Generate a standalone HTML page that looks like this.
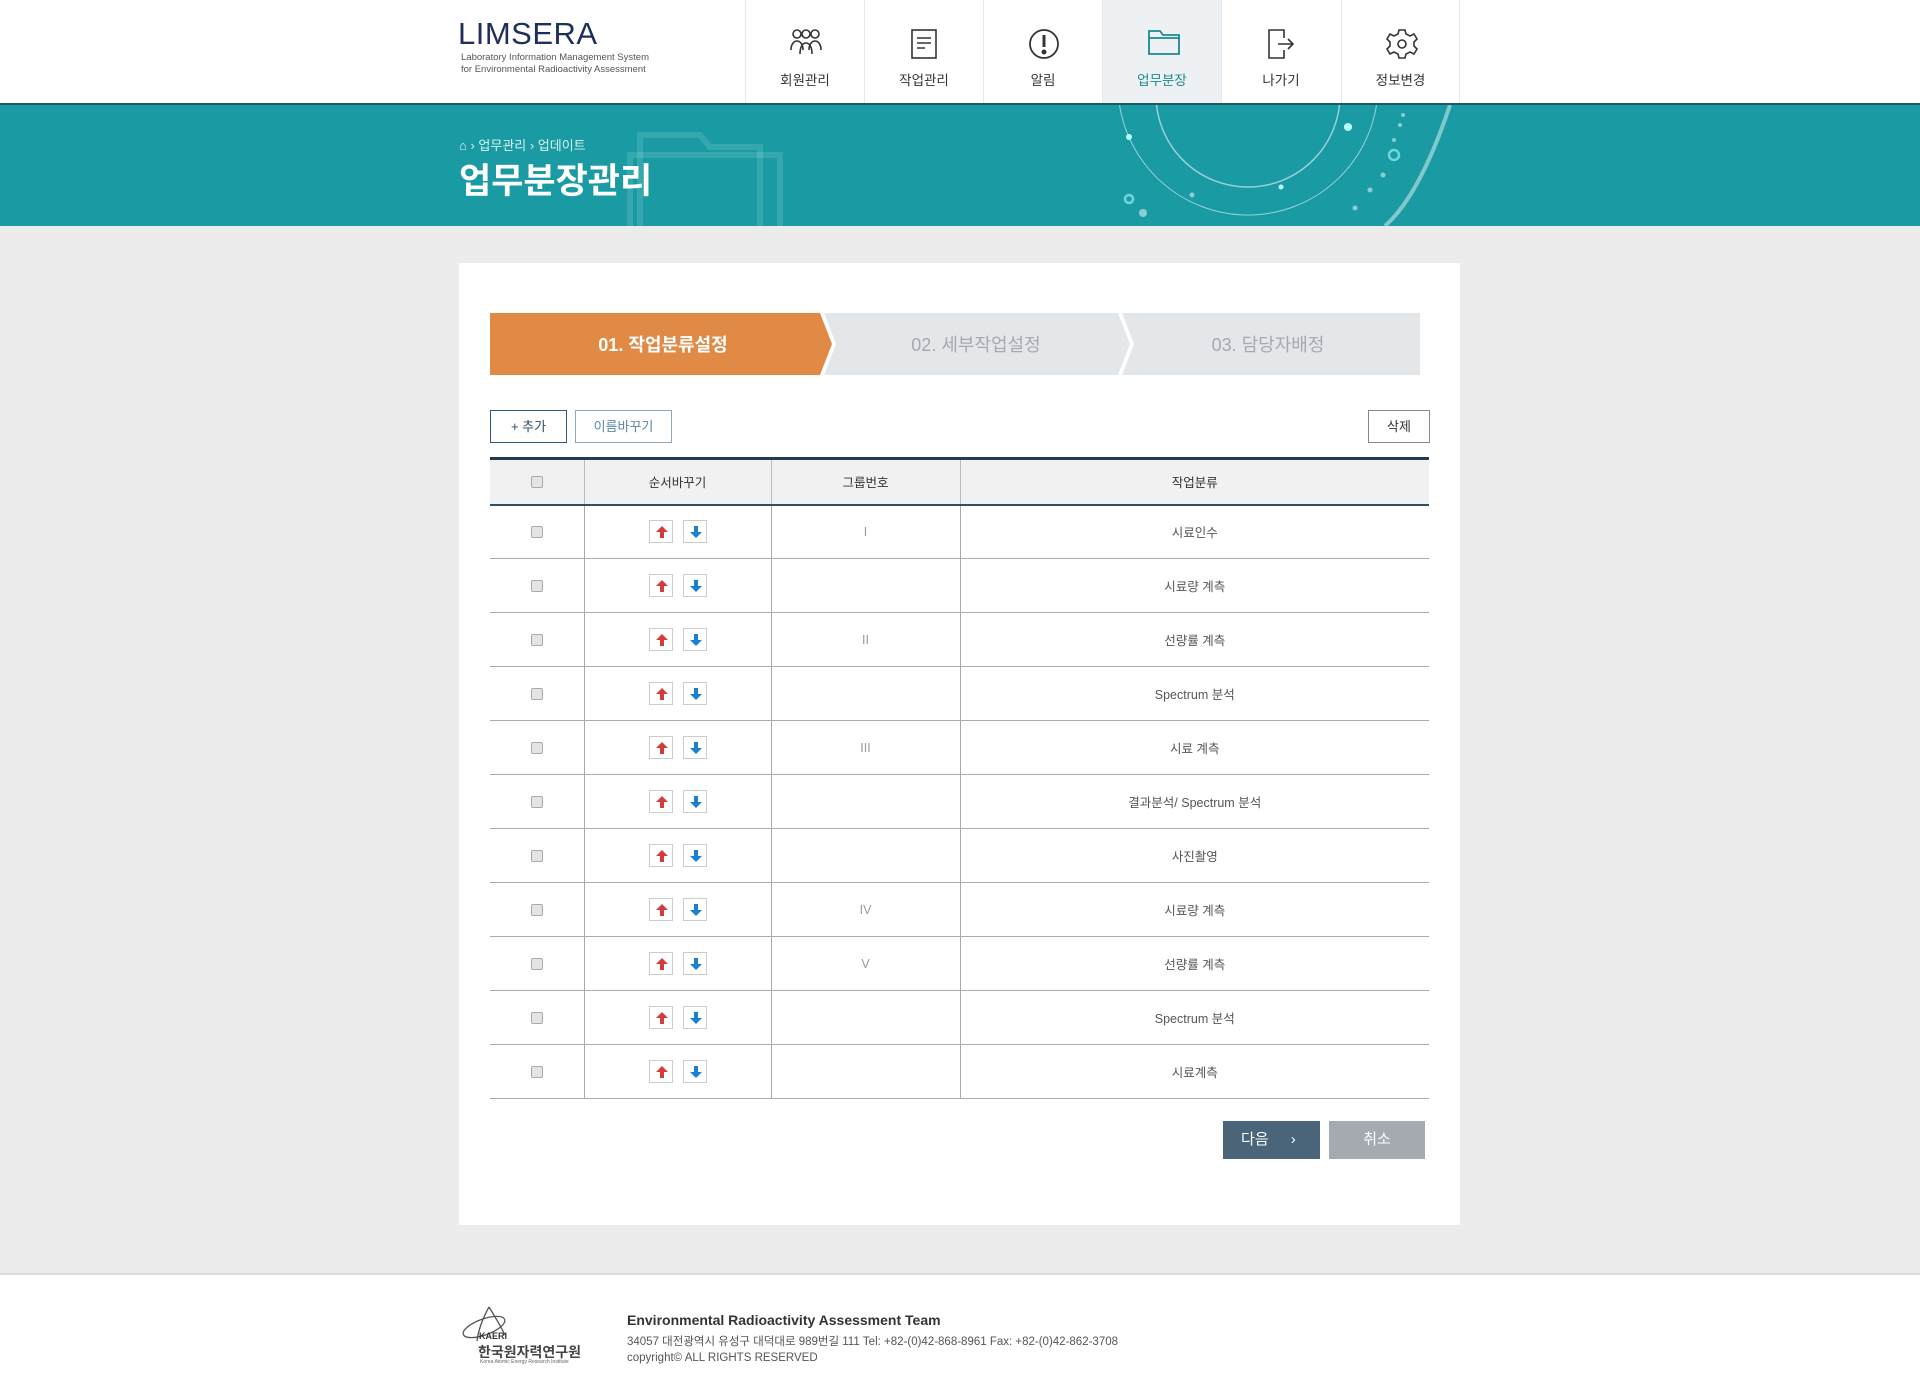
<!DOCTYPE html>
<html><head><meta charset="utf-8"><style>
*{margin:0;padding:0;box-sizing:border-box}
body{width:1920px;height:1397px;position:relative;font-family:"Liberation Sans","Noto Sans CJK KR",sans-serif;background:#ececec;overflow:hidden;color:#333}
.abs{position:absolute}
#hdr{left:0;top:0;width:1920px;height:105px;background:#fff;border-bottom:2px solid #1c5a6a}
.nav{top:0;height:103px;width:119px;border-left:1px solid #e8e8e8;text-align:center;font-size:13.5px;color:#333}
.nav svg{position:absolute;left:44px;top:28px}
.nav span{position:absolute;left:0;right:0;top:69px}
#ban{left:0;top:105px;width:1920px;height:121px;background:#1a9ba4;overflow:hidden}
#box{left:459px;top:263px;width:1001px;height:962px;background:#fff}
.btn{height:33px;border:1px solid #2d5a78;font-size:13px;line-height:31px;text-align:center;background:#fff;color:#2d4a60}
table{position:absolute;left:490px;top:457px;width:939px;border-collapse:collapse;border-top:3px solid #1e3c50;font-size:12.5px}
th{height:46px;background:#f1f1f1;font-weight:normal;border-bottom:2px solid #2f4f66;border-left:1px solid #bbb;color:#333}
td{height:54px;text-align:center;border-bottom:1px solid #aaa;border-left:1px solid #aaa;color:#555}
th:first-child,td:first-child{border-left:none}
.cb{display:inline-block;width:12px;height:12px;border:1px solid #aaa;border-radius:2px;background:#e4e4e4;vertical-align:middle}
.ab{display:inline-block;width:24px;height:23px;border:1px solid #ccc;margin:0 5px;vertical-align:middle;position:relative}
.ab svg{position:absolute;left:5px;top:4px}
.g{color:#999}
</style></head><body>
<div id="hdr" class="abs"></div>
<div class="abs" style="left:458px;top:16px;font-size:31px;color:#1f2f5c;letter-spacing:0.5px">LIMSERA</div>
<div class="abs" style="left:461px;top:52px;font-size:9.5px;color:#555;line-height:12px">Laboratory Information Management System<br>for Environmental Radioactivity Assessment</div>

<div class="abs nav" style="left:745px"><svg width="32" height="30" viewBox="0 0 32 30" fill="none" stroke="#333" stroke-width="1.6"><circle cx="7" cy="6" r="4"/><circle cx="16" cy="6" r="4"/><circle cx="25" cy="6" r="4"/><path d="M1 22c0-6 3-9 6-9s6 3 6 9M10 26c0-8 3-11 6-11s6 3 6 11M19 22c0-6 3-9 6-9s6 3 6 9"/></svg><span>회원관리</span></div>
<div class="abs nav" style="left:864px"><svg width="30" height="32" viewBox="0 0 30 32" fill="none" stroke="#333" stroke-width="1.6"><rect x="3" y="2" width="24" height="28"/><path d="M8 10h14M8 15h14M8 20h8"/></svg><span>작업관리</span></div>
<div class="abs nav" style="left:983px"><svg width="32" height="32" viewBox="0 0 32 32" fill="none" stroke="#333" stroke-width="1.8"><circle cx="16" cy="16" r="14"/><path d="M16 7v12" stroke-width="3"/><circle cx="16" cy="24" r="1.6" fill="#333"/></svg><span>알림</span></div>
<div class="abs nav" style="left:1102px;background:#eef1f4;color:#1a8a8e"><svg width="34" height="28" viewBox="0 0 34 28" fill="none" stroke="#1a8a8e" stroke-width="1.8"><path d="M2 3h11l3 4h16v19H2z"/><path d="M2 10h30"/></svg><span>업무분장</span></div>
<div class="abs nav" style="left:1221px"><svg width="30" height="32" viewBox="0 0 30 32" fill="none" stroke="#333" stroke-width="1.6"><path d="M18 10V2H3v28h15v-8"/><path d="M12 16h15M22 11l5 5-5 5"/></svg><span>나가기</span></div>
<div class="abs nav" style="left:1341px;border-right:1px solid #e8e8e8"><svg width="32" height="32" viewBox="0 0 32 32" fill="none" stroke="#333" stroke-width="1.6"><path d="M13 2h6l1 4 4 2 4-2 3 5-3 3v4l3 3-3 5-4-2-4 2-1 4h-6l-1-4-4-2-4 2-3-5 3-3v-4l-3-3 3-5 4 2 4-2z"/><circle cx="16" cy="16" r="4"/></svg><span>정보변경</span></div>

<div id="ban" class="abs">
<svg width="1920" height="121" style="position:absolute;left:0;top:0">
<g fill="none" stroke="rgba(255,255,255,0.12)" stroke-width="6"><path d="M640 121V30h60l10 12h50v79"/><path d="M630 121V50h150v71"/></g>
<g fill="none" stroke="rgba(255,255,255,0.55)" stroke-width="1.5"><circle cx="1248" cy="-10" r="92"/><circle cx="1248" cy="-20" r="130" stroke-width="1"/><path d="M1450 0 Q1420 90 1385 121" stroke-width="4" stroke="rgba(255,255,255,0.45)"/></g>
<g fill="#bff"><circle cx="1348" cy="22" r="4"/><circle cx="1281" cy="82" r="2.5"/><circle cx="1129" cy="32" r="3"/></g>
<g fill="rgba(255,255,255,0.5)"><circle cx="1143" cy="108" r="4"/><circle cx="1192" cy="90" r="2.5"/><circle cx="1383" cy="70" r="2.5"/><circle cx="1370" cy="85" r="2.5"/><circle cx="1355" cy="103" r="2.5"/><circle cx="1403" cy="10" r="2"/><circle cx="1400" cy="20" r="2"/><circle cx="1394" cy="35" r="2"/></g>
<g fill="none" stroke="rgba(150,240,240,0.7)" stroke-width="2.5"><circle cx="1394" cy="50" r="5"/><circle cx="1129" cy="94" r="4"/></g>
</svg>
<div class="abs" style="left:459px;top:30px;font-size:13px;color:#d6f2f4">⌂ › 업무관리 › 업데이트</div>
<div class="abs" style="left:459px;top:48px;font-size:35px;font-weight:bold;color:#fff">업무분장관리</div>
</div>

<div id="box" class="abs"></div>
<svg class="abs" style="left:490px;top:313px" width="930" height="62">
<polygon points="0,0 330,0 342,31 330,62 0,62" fill="#e08a45"/>
<polygon points="334,0 628,0 640,31 628,62 334,62 346,31" fill="#e4e7ea"/>
<polygon points="632,0 930,0 930,62 632,62 644,31" fill="#e4e7ea"/>
<g font-family="Liberation Sans,Noto Sans CJK KR,sans-serif" font-size="18" text-anchor="middle"><text x="173" y="38" fill="#fff" font-weight="bold">01. 작업분류설정</text><text x="486" y="38" fill="#a5a9ad">02. 세부작업설정</text><text x="778" y="38" fill="#a5a9ad">03. 담당자배정</text></g>
</svg>
<div class="abs btn" style="left:490px;top:410px;width:77px">+ 추가</div>
<div class="abs btn" style="left:575px;top:410px;width:97px;border-color:#8aa8bf;color:#5a88aa">이름바꾸기</div>
<div class="abs btn" style="left:1368px;top:410px;width:62px;border-color:#888;color:#333">삭제</div>

<table>
<tr><th style="width:94px"><span class="cb"></span></th><th style="width:187px">순서바꾸기</th><th style="width:189px">그룹번호</th><th>작업분류</th></tr>
<tr><td><span class="cb"></span></td><td><span class="ab"><svg width="14" height="14"><path d="M7 1L1 7h4v6h4V7h4z" fill="#d43c3c"/></svg></span><span class="ab"><svg width="14" height="14"><path d="M7 13L1 7h4V1h4v6h4z" fill="#1d7fd0"/></svg></span></td><td class="g">I</td><td>시료인수</td></tr>
<tr><td><span class="cb"></span></td><td><span class="ab"><svg width="14" height="14"><path d="M7 1L1 7h4v6h4V7h4z" fill="#d43c3c"/></svg></span><span class="ab"><svg width="14" height="14"><path d="M7 13L1 7h4V1h4v6h4z" fill="#1d7fd0"/></svg></span></td><td></td><td>시료량 계측</td></tr>
<tr><td><span class="cb"></span></td><td><span class="ab"><svg width="14" height="14"><path d="M7 1L1 7h4v6h4V7h4z" fill="#d43c3c"/></svg></span><span class="ab"><svg width="14" height="14"><path d="M7 13L1 7h4V1h4v6h4z" fill="#1d7fd0"/></svg></span></td><td class="g">II</td><td>선량률 계측</td></tr>
<tr><td><span class="cb"></span></td><td><span class="ab"><svg width="14" height="14"><path d="M7 1L1 7h4v6h4V7h4z" fill="#d43c3c"/></svg></span><span class="ab"><svg width="14" height="14"><path d="M7 13L1 7h4V1h4v6h4z" fill="#1d7fd0"/></svg></span></td><td></td><td>Spectrum 분석</td></tr>
<tr><td><span class="cb"></span></td><td><span class="ab"><svg width="14" height="14"><path d="M7 1L1 7h4v6h4V7h4z" fill="#d43c3c"/></svg></span><span class="ab"><svg width="14" height="14"><path d="M7 13L1 7h4V1h4v6h4z" fill="#1d7fd0"/></svg></span></td><td class="g">III</td><td>시료 계측</td></tr>
<tr><td><span class="cb"></span></td><td><span class="ab"><svg width="14" height="14"><path d="M7 1L1 7h4v6h4V7h4z" fill="#d43c3c"/></svg></span><span class="ab"><svg width="14" height="14"><path d="M7 13L1 7h4V1h4v6h4z" fill="#1d7fd0"/></svg></span></td><td></td><td>결과분석/ Spectrum 분석</td></tr>
<tr><td><span class="cb"></span></td><td><span class="ab"><svg width="14" height="14"><path d="M7 1L1 7h4v6h4V7h4z" fill="#d43c3c"/></svg></span><span class="ab"><svg width="14" height="14"><path d="M7 13L1 7h4V1h4v6h4z" fill="#1d7fd0"/></svg></span></td><td></td><td>사진촬영</td></tr>
<tr><td><span class="cb"></span></td><td><span class="ab"><svg width="14" height="14"><path d="M7 1L1 7h4v6h4V7h4z" fill="#d43c3c"/></svg></span><span class="ab"><svg width="14" height="14"><path d="M7 13L1 7h4V1h4v6h4z" fill="#1d7fd0"/></svg></span></td><td class="g">IV</td><td>시료량 계측</td></tr>
<tr><td><span class="cb"></span></td><td><span class="ab"><svg width="14" height="14"><path d="M7 1L1 7h4v6h4V7h4z" fill="#d43c3c"/></svg></span><span class="ab"><svg width="14" height="14"><path d="M7 13L1 7h4V1h4v6h4z" fill="#1d7fd0"/></svg></span></td><td class="g">V</td><td>선량률 계측</td></tr>
<tr><td><span class="cb"></span></td><td><span class="ab"><svg width="14" height="14"><path d="M7 1L1 7h4v6h4V7h4z" fill="#d43c3c"/></svg></span><span class="ab"><svg width="14" height="14"><path d="M7 13L1 7h4V1h4v6h4z" fill="#1d7fd0"/></svg></span></td><td></td><td>Spectrum 분석</td></tr>
<tr><td><span class="cb"></span></td><td><span class="ab"><svg width="14" height="14"><path d="M7 1L1 7h4v6h4V7h4z" fill="#d43c3c"/></svg></span><span class="ab"><svg width="14" height="14"><path d="M7 13L1 7h4V1h4v6h4z" fill="#1d7fd0"/></svg></span></td><td></td><td>시료계측</td></tr>
</table>

<div class="abs" style="left:1223px;top:1121px;width:97px;height:38px;background:#4a657a;color:#fff;font-size:15px;line-height:38px;padding-left:18px">다음 <span style="margin-left:18px">›</span></div>
<div class="abs" style="left:1329px;top:1121px;width:96px;height:38px;background:#a4aab0;color:#fff;font-size:15px;line-height:38px;text-align:center">취소</div>

<div class="abs" style="left:0;top:1273px;width:1920px;height:124px;background:#fff;border-top:2px solid #ddd"></div>
<svg class="abs" style="left:459px;top:1305px" width="60" height="40"><g fill="none" stroke="#555" stroke-width="1.3"><ellipse cx="25" cy="22" rx="22" ry="8" transform="rotate(-20 25 22)"/><path d="M30 2 Q20 20 18 36"/><path d="M30 2 Q40 18 46 30"/></g></svg>
<div class="abs" style="left:479px;top:1331px;font-size:9px;font-weight:bold;color:#333">KAERI</div>
<div class="abs" style="left:478px;top:1342px;font-size:14px;font-weight:bold;color:#444">한국원자력연구원</div>
<div class="abs" style="left:480px;top:1359px;font-size:5px;color:#666">Korea Atomic Energy Research Institute</div>
<div class="abs" style="left:627px;top:1312px;font-size:14px;font-weight:bold;color:#333">Environmental Radioactivity Assessment Team</div>
<div class="abs" style="left:627px;top:1334px;font-size:11.5px;color:#555;line-height:16px">34057 대전광역시 유성구 대덕대로 989번길 111 Tel: +82-(0)42-868-8961 Fax: +82-(0)42-862-3708<br>copyright© ALL RIGHTS RESERVED</div>
</body></html>
